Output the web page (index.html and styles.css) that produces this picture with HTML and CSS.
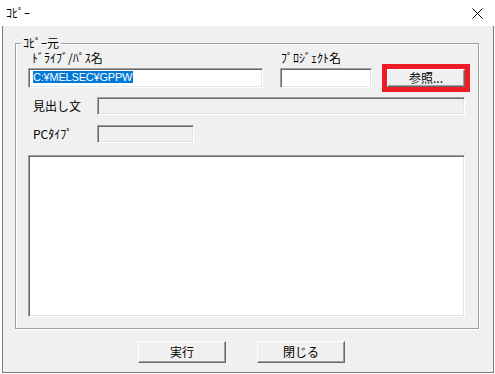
FILE: index.html
```html
<!DOCTYPE html>
<html lang="ja">
<head>
  <meta charset="UTF-8">
  <title>ｺﾋﾟｰ</title>
  <link rel="stylesheet" href="styles.css">
</head>
<body>
  <div class="window">
    <div class="titlebar">
      <span class="title">ｺﾋﾟｰ</span>
      <svg class="close" width="11" height="11" viewBox="0 0 11 11">
        <path d="M0.5 0.5 L10.5 10.5 M10.5 0.5 L0.5 10.5" stroke="#000" stroke-width="1" fill="none"/>
      </svg>
    </div>
    <div class="client">
      <fieldset class="group">
        <legend>ｺﾋﾟｰ元</legend>
        <div class="group-body">
          <div class="top-row">
            <div class="path-field">
              <label class="cap cap-path">ﾄﾞﾗｲﾌﾞ/ﾊﾟｽ名</label>
              <div class="field field-path"><span class="selected">C:¥MELSEC¥GPPW</span></div>
            </div>
            <div class="project-field">
              <label class="cap cap-project">ﾌﾟﾛｼﾞｪｸﾄ名</label>
              <div class="field field-project"></div>
            </div>
            <button class="btn btn-browse">参照...</button>
          </div>
          <div class="line-row first">
            <label class="line-label">見出し文</label>
            <div class="field disabled field-heading"></div>
          </div>
          <div class="line-row">
            <label class="line-label">PCﾀｲﾌﾟ</label>
            <div class="field disabled field-type"></div>
          </div>
          <div class="field field-list"></div>
        </div>
      </fieldset>
      <div class="actions">
        <button class="btn btn-action">実行</button>
        <button class="btn btn-action">閉じる</button>
      </div>
    </div>
  </div>
</body>
</html>
```

FILE: styles.css
```css
body {
  margin: 0;
  background: #fff;
  font-family: "Noto Sans CJK JP", "Noto Sans", sans-serif;
  font-size: 12px;
  color: #000;
}
.window {
  width: 495px;
  height: 374px;
  display: flex;
  flex-direction: column;
}
.titlebar {
  height: 26px;
  flex: none;
  display: flex;
  align-items: center;
  justify-content: space-between;
  padding: 0 12px 0 6px;
  box-sizing: border-box;
  line-height: 14px;
}
.close { display: block; }
.client {
  flex: 1;
  margin: 0 1px 1px 2px;
  border: 1px solid #7a7a7a;
  border-top: none;
  background: #f0f0f0;
}
.group {
  margin: 11px 14px 0 12px;
  padding: 0;
  border: 1px solid #a0a0a0;
  box-shadow: inset 1px 1px 0 #fff, 1px 1px 0 #fff;
  min-width: 0;
}
.group legend {
  margin-left: 5px;
  padding: 0 2px;
  line-height: 12px;
}
.group-body {
  padding: 2px 13px 11px 12px;
}
.top-row {
  display: flex;
  align-items: flex-end;
}
.path-field { width: 235px; }
.project-field { width: 92px; margin-left: 17px; }
.cap {
  display: block;
  line-height: 14px;
  margin-bottom: 3px;
}
.cap-path { padding-left: 4px; }
.cap-project { padding-left: 1px; }
.field {
  box-sizing: border-box;
  background: #fff;
  border-top: 1px solid #a0a0a0;
  border-left: 1px solid #a0a0a0;
  border-right: 1px solid #fff;
  border-bottom: 1px solid #fff;
  box-shadow: inset 1px 1px 0 #696969, inset -1px -1px 0 #e3e3e3;
}
.field.disabled { background: #f0f0f0; }
.field-path,
.field-project { height: 20px; }
.field-path {
  padding: 2px 0 0 4px;
  font-family: "Liberation Sans", sans-serif;
  font-size: 11px;
  letter-spacing: -0.2px;
  line-height: 12px;
}
.selected {
  display: inline-block;
  background: #0078d7;
  color: #fff;
  padding-right: 1px;
}
.btn {
  box-sizing: border-box;
  font: inherit;
  color: #000;
  background: #f0f0f0;
  border-top: 1px solid #fff;
  border-left: 1px solid #fff;
  border-right: 1px solid #696969;
  border-bottom: 1px solid #696969;
  box-shadow: inset -1px -1px 0 #a0a0a0;
  padding: 0;
  line-height: 14px;
}
.btn-browse {
  width: 78px;
  height: 18px;
  margin: 0 0 1px 15px;
  outline: 5px solid #ed1c24;
}
.line-row {
  display: flex;
  align-items: center;
  margin-top: 10px;
}
.line-row.first { margin-top: 9px; }
.line-label {
  width: 69px;
  box-sizing: border-box;
  padding-left: 5px;
  line-height: 14px;
}
.field-heading { width: 368px; height: 18px; }
.field-type { width: 97px; height: 18px; }
.field-list {
  width: 437px;
  height: 162px;
  margin-top: 12px;
}
.actions {
  display: flex;
  gap: 31px;
  padding-left: 135px;
  margin-top: 12px;
}
.btn-action {
  width: 88px;
  height: 22px;
}
```
